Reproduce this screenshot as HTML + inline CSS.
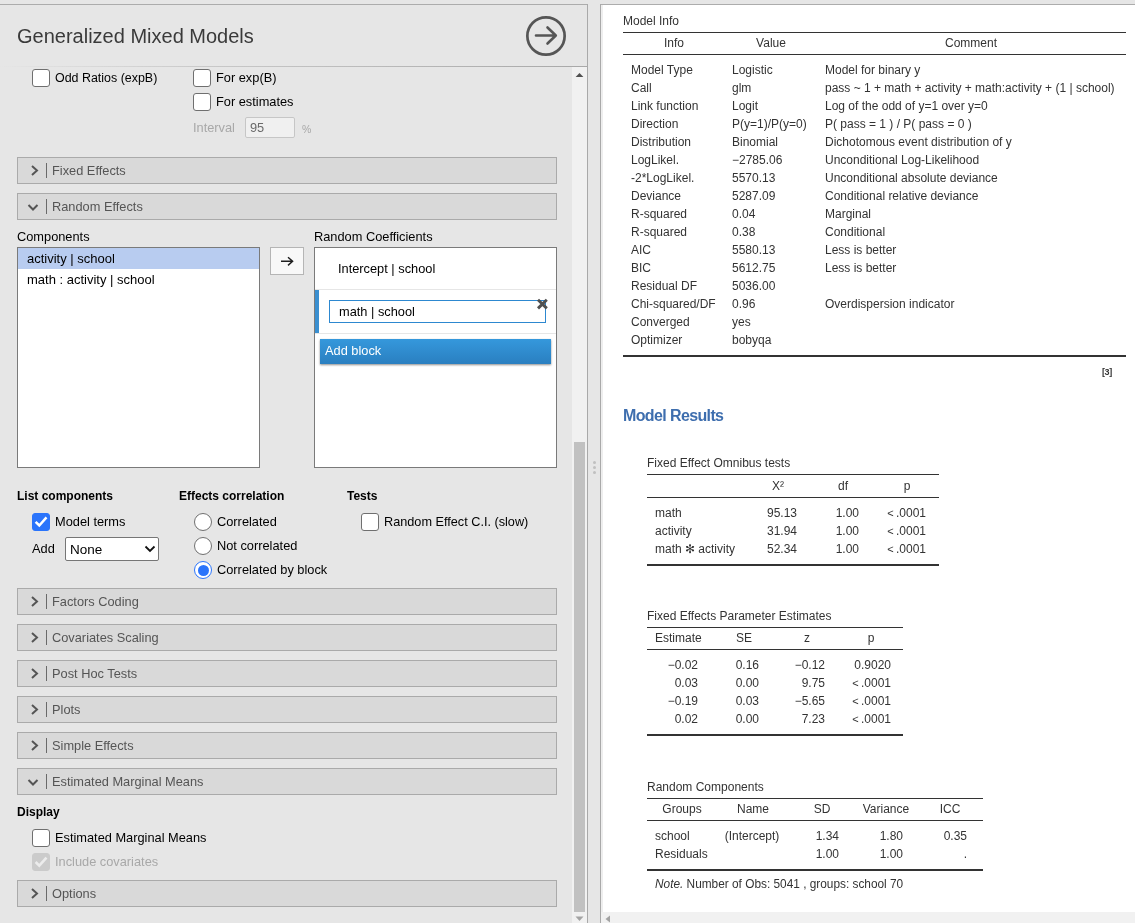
<!DOCTYPE html>
<html><head><meta charset="utf-8">
<style>
*{box-sizing:border-box}
html,body{margin:0;padding:0}
body{width:1135px;height:923px;overflow:hidden;background:#e6e6e6;position:relative;font-family:"Liberation Sans",sans-serif;color:#222}
.a{position:absolute;white-space:nowrap}
.t{position:absolute;white-space:nowrap;line-height:16px;font-size:12.8px;color:#000}
.cb{position:absolute;width:18px;height:18px;border:1px solid #6f6f6f;border-radius:3px;background:#fff}
.acc{position:absolute;left:17px;width:540px;height:27px;background:#d9d9d9;border:1px solid #aaa}
.acc .lbl{position:absolute;left:34px;top:5px;line-height:16px;font-size:12.8px;color:#555}
.acc .dv{position:absolute;left:28px;top:5px;width:1px;height:15px;background:#6a6a6a}
.acc svg{position:absolute;left:11px;top:7px}
.rad{position:absolute;width:18px;height:18px;border-radius:50%;border:1px solid #6f6f6f;background:#fff}
.bold{font-weight:bold}
.r{position:absolute;white-space:nowrap;font-size:12px;line-height:16px;color:#333}
.rule{position:absolute;height:1px;background:#333}
.rule2{position:absolute;height:2px;background:#222}
</style></head>
<body><div id="wrap" style="position:absolute;left:0;top:0;width:1135px;height:923px;will-change:transform">
<!-- frame -->
<div class="a" style="left:0;top:4px;width:588px;height:1px;background:#acacac"></div>
<div class="a" style="left:600px;top:4px;width:535px;height:1px;background:#acacac"></div>
<div class="a" style="left:587px;top:4px;width:1px;height:919px;background:#a9a9a9"></div>
<div class="a" style="left:600px;top:4px;width:1px;height:919px;background:#a9a9a9"></div>
<div class="a" style="left:601px;top:5px;width:2px;height:907px;background:#eeeeee"></div>
<div class="a" style="left:603px;top:5px;width:532px;height:907px;background:#fff"></div>
<div class="a" style="left:601px;top:912px;width:534px;height:11px;background:#f1f1f1"></div>

<!-- header -->
<div class="a" style="left:17px;top:24px;font-size:20px;line-height:24px;color:#3a3a3a">Generalized Mixed Models</div>
<svg class="a" style="left:524px;top:14px" width="44" height="44" viewBox="0 0 44 44">
  <circle cx="22" cy="22" r="18.65" fill="none" stroke="#555" stroke-width="2.7"/>
  <path d="M12 21.5 H31.5 M23.5 13.5 L31.8 21.5 L23.5 29.5" fill="none" stroke="#555" stroke-width="2.6" stroke-linecap="round" stroke-linejoin="round"/>
</svg>
<div class="a" style="left:0;top:66px;width:587px;height:1px;background:linear-gradient(to right,rgba(200,200,200,0),#c8c8c8 35%,#a8a8a8)"></div>


<!-- top checkboxes -->
<div class="cb" style="left:32px;top:69px"></div>
<div class="t" style="left:55px;top:70px;font-size:12.45px">Odd Ratios (expB)</div>
<div class="cb" style="left:193px;top:69px"></div>
<div class="t" style="left:216px;top:70px">For exp(B)</div>
<div class="cb" style="left:193px;top:93px"></div>
<div class="t" style="left:216px;top:94px">For estimates</div>
<div class="t" style="left:193px;top:120px;color:#a8a8a8">Interval</div>
<div class="a" style="left:245px;top:117px;width:50px;height:21px;background:#f0f0f0;border:1px solid #c6c6c6;border-radius:2px"></div>
<div class="t" style="left:250px;top:120px;color:#6a6a6a">95</div>
<div class="t" style="left:302px;top:120.5px;color:#a8a8a8;font-size:10.5px">%</div>

<!-- accordions -->
<div class="acc" style="top:157px"><svg width="10" height="12"><path d="M3 1 L8 5.5 L3 10" fill="none" stroke="#555" stroke-width="2"/></svg><div class="dv"></div><div class="lbl">Fixed Effects</div></div>
<div class="acc" style="top:193px"><svg width="12" height="10" style="left:9px;top:9px"><path d="M1.5 2 L6 6.5 L10.5 2" fill="none" stroke="#555" stroke-width="2"/></svg><div class="dv"></div><div class="lbl">Random Effects</div></div>

<!-- components -->
<div class="t" style="left:17px;top:229px">Components</div>
<div class="t" style="left:314px;top:229px">Random Coefficients</div>
<div class="a" style="left:17px;top:247px;width:243px;height:221px;background:#fff;border:1px solid #7a7a7a"></div>
<div class="a" style="left:18px;top:248px;width:241px;height:21px;background:#b8ccf0"></div>
<div class="t" style="left:27px;top:251px;font-size:13px">activity | school</div>
<div class="t" style="left:27px;top:272px;font-size:13px">math : activity | school</div>

<div class="a" style="left:270px;top:247px;width:34px;height:28px;background:#f8f8f8;border:1px solid #b5b5b5"></div>
<svg class="a" style="left:278px;top:254px" width="18" height="14"><path d="M3 7.3 H14.6 M10 3.2 L14.6 7.3 L10 11.4" fill="none" stroke="#1e1e1e" stroke-width="1.45"/></svg>

<div class="a" style="left:314px;top:247px;width:243px;height:221px;background:#fff;border:1px solid #7a7a7a"></div>
<div class="t" style="left:338px;top:261px">Intercept | school</div>
<div class="a" style="left:315px;top:289px;width:241px;height:1px;background:#e6e6e6"></div>
<div class="a" style="left:315px;top:290px;width:4px;height:43px;background:#3a8fd0"></div>
<div class="a" style="left:315px;top:333px;width:241px;height:1px;background:#e6e6e6"></div>
<div class="a" style="left:329px;top:300px;width:217px;height:23px;background:#fff;border:1px solid #2d88d0"></div>
<div class="t" style="left:339px;top:304px">math | school</div>
<svg class="a" style="left:536px;top:297px" width="14" height="14"><path d="M2.0 2.8 L10.8 11.4 M10.8 2.8 L2.0 11.4" stroke="#505050" stroke-width="2.9"/></svg>
<div class="a" style="left:320px;top:339px;width:231px;height:25px;background:linear-gradient(#3598dc,#2a7fc0);box-shadow:0 1px 2px rgba(0,0,0,0.45)"></div>
<div class="t" style="left:325px;top:343px;color:#fff">Add block</div>

<!-- options row -->
<div class="t bold" style="left:17px;top:488px;font-size:12px">List components</div>
<div class="t bold" style="left:179px;top:488px;font-size:12px">Effects correlation</div>
<div class="t bold" style="left:347px;top:488px;font-size:12px">Tests</div>
<div class="cb" style="left:32px;top:513px;background:#2a74fb;border-color:#2a74fb"></div>
<svg class="a" style="left:32px;top:513px" width="18" height="18"><path d="M3.6 8.8 L7.3 12.5 L14.5 4.4" fill="none" stroke="#fff" stroke-width="2.5"/></svg>
<div class="t" style="left:55px;top:514px">Model terms</div>
<div class="t" style="left:32px;top:541px">Add</div>
<div class="a" style="left:65px;top:537px;width:94px;height:24px;background:#fff;border:1px solid #767676;border-radius:2px"></div>
<div class="t" style="left:70px;top:542px;font-size:13.5px">None</div>
<svg class="a" style="left:144px;top:545px" width="12" height="8"><path d="M1.5 1.5 L6 6 L10.5 1.5" fill="none" stroke="#111" stroke-width="1.8"/></svg>

<div class="rad" style="left:194px;top:513px"></div>
<div class="t" style="left:217px;top:514px">Correlated</div>
<div class="rad" style="left:194px;top:537px"></div>
<div class="t" style="left:217px;top:538px">Not correlated</div>
<div class="rad" style="left:194px;top:561px;border:1.5px solid #2a74fb"></div>
<div class="a" style="left:197.5px;top:564.5px;width:11px;height:11px;border-radius:50%;background:#2a74fb"></div>
<div class="t" style="left:217px;top:562px">Correlated by block</div>

<div class="cb" style="left:361px;top:513px"></div>
<div class="t" style="left:384px;top:514px;font-size:12.7px">Random Effect C.I. (slow)</div>

<!-- lower accordions -->
<div class="acc" style="top:588px"><svg width="10" height="12"><path d="M3 1 L8 5.5 L3 10" fill="none" stroke="#555" stroke-width="2"/></svg><div class="dv"></div><div class="lbl">Factors Coding</div></div>
<div class="acc" style="top:624px"><svg width="10" height="12"><path d="M3 1 L8 5.5 L3 10" fill="none" stroke="#555" stroke-width="2"/></svg><div class="dv"></div><div class="lbl">Covariates Scaling</div></div>
<div class="acc" style="top:660px"><svg width="10" height="12"><path d="M3 1 L8 5.5 L3 10" fill="none" stroke="#555" stroke-width="2"/></svg><div class="dv"></div><div class="lbl">Post Hoc Tests</div></div>
<div class="acc" style="top:696px"><svg width="10" height="12"><path d="M3 1 L8 5.5 L3 10" fill="none" stroke="#555" stroke-width="2"/></svg><div class="dv"></div><div class="lbl">Plots</div></div>
<div class="acc" style="top:732px"><svg width="10" height="12"><path d="M3 1 L8 5.5 L3 10" fill="none" stroke="#555" stroke-width="2"/></svg><div class="dv"></div><div class="lbl">Simple Effects</div></div>
<div class="acc" style="top:768px"><svg width="12" height="10" style="left:9px;top:9px"><path d="M1.5 2 L6 6.5 L10.5 2" fill="none" stroke="#555" stroke-width="2"/></svg><div class="dv"></div><div class="lbl">Estimated Marginal Means</div></div>

<div class="t bold" style="left:17px;top:804px;font-size:12px">Display</div>
<div class="cb" style="left:32px;top:829px"></div>
<div class="t" style="left:55px;top:830px">Estimated Marginal Means</div>
<div class="cb" style="left:32px;top:853px;background:#cbcbcb;border-color:#cbcbcb"></div>
<svg class="a" style="left:32px;top:853px" width="18" height="18"><path d="M3.6 9 L7.3 12.7 L14.5 4.6" fill="none" stroke="#ececec" stroke-width="2.6"/></svg>
<div class="t" style="left:55px;top:854px;color:#a8a8a8">Include covariates</div>
<div class="acc" style="top:880px"><svg width="10" height="12"><path d="M3 1 L8 5.5 L3 10" fill="none" stroke="#555" stroke-width="2"/></svg><div class="dv"></div><div class="lbl">Options</div></div>

<!-- scrollbar -->
<div class="a" style="left:572px;top:67px;width:15px;height:856px;background:#f1f1f1"></div>
<svg class="a" style="left:572px;top:70px" width="15" height="10"><path d="M3.6 7 L7.5 3 L11.4 7 Z" fill="#505050"/></svg>
<div class="a" style="left:574px;top:442px;width:11px;height:470px;background:#c1c1c1"></div>
<svg class="a" style="left:572px;top:914px" width="15" height="9"><path d="M3.5 2.5 L7.5 7 L11.5 2.5 Z" fill="#a3a3a3"/></svg>

<!-- splitter dots -->
<div class="a" style="left:592.5px;top:460.5px;width:3px;height:3px;border-radius:50%;background:#c0c0c0"></div>
<div class="a" style="left:592.5px;top:465.5px;width:3px;height:3px;border-radius:50%;background:#c0c0c0"></div>
<div class="a" style="left:592.5px;top:470.5px;width:3px;height:3px;border-radius:50%;background:#c0c0c0"></div>











<!-- RIGHT -->
<div class="r" style="left:623px;top:13px;">Model Info</div>
<div class="a" style="left:623px;top:32px;width:503px;height:1px;background:#333"></div>
<div class="r" style="left:524px;width:300px;text-align:center;top:35px;">Info</div>
<div class="r" style="left:621px;width:300px;text-align:center;top:35px;">Value</div>
<div class="r" style="left:821px;width:300px;text-align:center;top:35px;">Comment</div>
<div class="a" style="left:623px;top:54px;width:503px;height:1px;background:#333"></div>
<div class="r" style="left:631px;top:62px;">Model Type</div>
<div class="r" style="left:732px;top:62px;">Logistic</div>
<div class="r" style="left:825px;top:62px;">Model for binary y</div>
<div class="r" style="left:631px;top:80px;">Call</div>
<div class="r" style="left:732px;top:80px;">glm</div>
<div class="r" style="left:825px;top:80px;">pass ~ 1 + math + activity + math:activity + (1 | school)</div>
<div class="r" style="left:631px;top:98px;">Link function</div>
<div class="r" style="left:732px;top:98px;">Logit</div>
<div class="r" style="left:825px;top:98px;">Log of the odd of y=1 over y=0</div>
<div class="r" style="left:631px;top:116px;">Direction</div>
<div class="r" style="left:732px;top:116px;">P(y=1)/P(y=0)</div>
<div class="r" style="left:825px;top:116px;">P( pass = 1 ) / P( pass = 0 )</div>
<div class="r" style="left:631px;top:134px;">Distribution</div>
<div class="r" style="left:732px;top:134px;">Binomial</div>
<div class="r" style="left:825px;top:134px;">Dichotomous event distribution of y</div>
<div class="r" style="left:631px;top:152px;">LogLikel.</div>
<div class="r" style="left:732px;top:152px;">&minus;2785.06</div>
<div class="r" style="left:825px;top:152px;">Unconditional Log-Likelihood</div>
<div class="r" style="left:631px;top:170px;">-2*LogLikel.</div>
<div class="r" style="left:732px;top:170px;">5570.13</div>
<div class="r" style="left:825px;top:170px;">Unconditional absolute deviance</div>
<div class="r" style="left:631px;top:188px;">Deviance</div>
<div class="r" style="left:732px;top:188px;">5287.09</div>
<div class="r" style="left:825px;top:188px;">Conditional relative deviance</div>
<div class="r" style="left:631px;top:206px;">R-squared</div>
<div class="r" style="left:732px;top:206px;">0.04</div>
<div class="r" style="left:825px;top:206px;">Marginal</div>
<div class="r" style="left:631px;top:224px;">R-squared</div>
<div class="r" style="left:732px;top:224px;">0.38</div>
<div class="r" style="left:825px;top:224px;">Conditional</div>
<div class="r" style="left:631px;top:242px;">AIC</div>
<div class="r" style="left:732px;top:242px;">5580.13</div>
<div class="r" style="left:825px;top:242px;">Less is better</div>
<div class="r" style="left:631px;top:260px;">BIC</div>
<div class="r" style="left:732px;top:260px;">5612.75</div>
<div class="r" style="left:825px;top:260px;">Less is better</div>
<div class="r" style="left:631px;top:278px;">Residual DF</div>
<div class="r" style="left:732px;top:278px;">5036.00</div>
<div class="r" style="left:631px;top:296px;">Chi-squared/DF</div>
<div class="r" style="left:732px;top:296px;">0.96</div>
<div class="r" style="left:825px;top:296px;">Overdispersion indicator</div>
<div class="r" style="left:631px;top:314px;">Converged</div>
<div class="r" style="left:732px;top:314px;">yes</div>
<div class="r" style="left:631px;top:332px;">Optimizer</div>
<div class="r" style="left:732px;top:332px;">bobyqa</div>
<div class="a" style="left:623px;top:355px;width:503px;height:2px;background:#333"></div>
<div class="a" style="left:1102px;top:366px;font-size:9px;line-height:12px;font-weight:bold;letter-spacing:-0.4px;color:#333">[3]</div>
<div class="a" style="left:623px;top:406px;font-size:16px;letter-spacing:-0.62px;line-height:20px;font-weight:bold;color:#3e6eae">Model Results</div>
<div class="r" style="left:647px;top:455px;">Fixed Effect Omnibus tests</div>
<div class="a" style="left:647px;top:474px;width:292px;height:1px;background:#333"></div>
<div class="r" style="left:628px;width:300px;text-align:center;top:478px;">X²</div>
<div class="r" style="left:693px;width:300px;text-align:center;top:478px;">df</div>
<div class="r" style="left:757px;width:300px;text-align:center;top:478px;">p</div>
<div class="a" style="left:647px;top:497px;width:292px;height:1px;background:#333"></div>
<div class="r" style="left:655px;top:505px;">math</div>
<div class="r" style="right:338px;top:505px;">95.13</div>
<div class="r" style="right:276px;top:505px;">1.00</div>
<div class="r" style="right:209px;top:505px;"><span style='font-size:11px'>&lt;</span>&#8201;.0001</div>
<div class="r" style="left:655px;top:523px;">activity</div>
<div class="r" style="right:338px;top:523px;">31.94</div>
<div class="r" style="right:276px;top:523px;">1.00</div>
<div class="r" style="right:209px;top:523px;"><span style='font-size:11px'>&lt;</span>&#8201;.0001</div>
<div class="r" style="left:655px;top:541px;">math &#x273B; activity</div>
<div class="r" style="right:338px;top:541px;">52.34</div>
<div class="r" style="right:276px;top:541px;">1.00</div>
<div class="r" style="right:209px;top:541px;"><span style='font-size:11px'>&lt;</span>&#8201;.0001</div>
<div class="a" style="left:647px;top:564px;width:292px;height:2px;background:#333"></div>
<div class="r" style="left:647px;top:608px;">Fixed Effects Parameter Estimates</div>
<div class="a" style="left:647px;top:627px;width:256px;height:1px;background:#333"></div>
<div class="r" style="left:655px;top:630px;">Estimate</div>
<div class="r" style="left:736px;top:630px;">SE</div>
<div class="r" style="left:657px;width:300px;text-align:center;top:630px;">z</div>
<div class="r" style="left:721px;width:300px;text-align:center;top:630px;">p</div>
<div class="a" style="left:647px;top:649px;width:256px;height:1px;background:#333"></div>
<div class="r" style="right:437px;top:657px;">&minus;0.02</div>
<div class="r" style="right:376px;top:657px;">0.16</div>
<div class="r" style="right:310px;top:657px;">&minus;0.12</div>
<div class="r" style="right:244px;top:657px;">0.9020</div>
<div class="r" style="right:437px;top:675px;">0.03</div>
<div class="r" style="right:376px;top:675px;">0.00</div>
<div class="r" style="right:310px;top:675px;">9.75</div>
<div class="r" style="right:244px;top:675px;"><span style='font-size:11px'>&lt;</span>&#8201;.0001</div>
<div class="r" style="right:437px;top:693px;">&minus;0.19</div>
<div class="r" style="right:376px;top:693px;">0.03</div>
<div class="r" style="right:310px;top:693px;">&minus;5.65</div>
<div class="r" style="right:244px;top:693px;"><span style='font-size:11px'>&lt;</span>&#8201;.0001</div>
<div class="r" style="right:437px;top:711px;">0.02</div>
<div class="r" style="right:376px;top:711px;">0.00</div>
<div class="r" style="right:310px;top:711px;">7.23</div>
<div class="r" style="right:244px;top:711px;"><span style='font-size:11px'>&lt;</span>&#8201;.0001</div>
<div class="a" style="left:647px;top:734px;width:256px;height:2px;background:#333"></div>
<div class="r" style="left:647px;top:779px;">Random Components</div>
<div class="a" style="left:647px;top:798px;width:336px;height:1px;background:#333"></div>
<div class="r" style="left:532px;width:300px;text-align:center;top:801px;">Groups</div>
<div class="r" style="left:603px;width:300px;text-align:center;top:801px;">Name</div>
<div class="r" style="left:672px;width:300px;text-align:center;top:801px;">SD</div>
<div class="r" style="left:736px;width:300px;text-align:center;top:801px;">Variance</div>
<div class="r" style="left:800px;width:300px;text-align:center;top:801px;">ICC</div>
<div class="a" style="left:647px;top:820px;width:336px;height:1px;background:#333"></div>
<div class="r" style="left:655px;top:828px;">school</div>
<div class="r" style="left:602px;width:300px;text-align:center;top:828px;">(Intercept)</div>
<div class="r" style="right:296px;top:828px;">1.34</div>
<div class="r" style="right:232px;top:828px;">1.80</div>
<div class="r" style="right:168px;top:828px;">0.35</div>
<div class="r" style="left:655px;top:846px;">Residuals</div>
<div class="r" style="right:296px;top:846px;">1.00</div>
<div class="r" style="right:232px;top:846px;">1.00</div>
<div class="r" style="right:168px;top:846px;">.</div>
<div class="a" style="left:647px;top:869px;width:336px;height:2px;background:#333"></div>
<div class="r" style="left:655px;top:876px;font-size:11.85px"><i>Note.</i> Number of Obs: 5041 , groups: school 70</div>
<svg class="a" style="left:601px;top:914px" width="12" height="9"><path d="M9 1.5 L4.5 5 L9 8.5 Z" fill="#a3a3a3"/></svg>
<!-- /RIGHT -->
</div></body></html>
